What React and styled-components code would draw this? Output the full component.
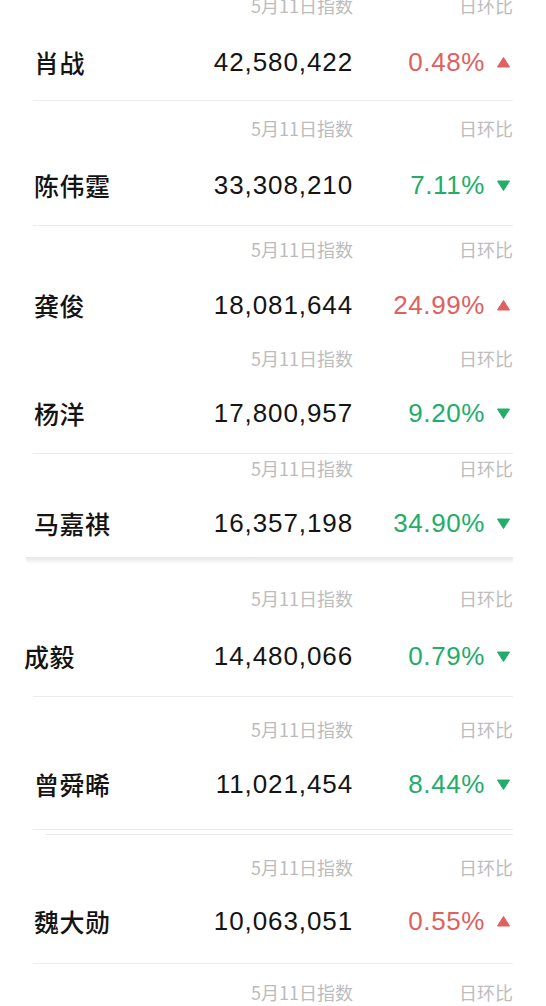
import React from "react";
import styled, { createGlobalStyle } from "styled-components";

const GlobalStyle = createGlobalStyle`
  html, body {
    margin: 0;
    padding: 0;
    background: #ffffff;
  }
  body {
    font-family: "Noto Sans CJK SC", "Liberation Sans", sans-serif;
    overflow: hidden;
  }
`;

const RED = "#e0605f";
const GREEN = "#22ad6b";

const Page = styled.div`
  width: 546px;
  height: 1006px;
  overflow: hidden;
  background: #ffffff;
`;

const Card = styled.div`
  margin-top: -7px;
  padding-bottom: 16px;
  background: #ffffff;
`;

// soft shadow left under the first card of the stitched list
const CardEdge = styled.div`
  height: 7px;
  margin: 0 33px 0 26px;
  border-radius: 0 0 4px 4px;
  background: linear-gradient(#e6e6e6, #f4f4f4 60%, #ffffff);
`;

const Section = styled.div`
  background: #ffffff;
`;

const Row = styled.div`
  padding-top: ${(p) => p.$top}px;
`;

const Line = styled.div`
  display: grid;
  grid-template-columns: 1fr auto 160px;
  align-items: center;
  padding-right: 33px;
`;

const Header = styled(Line)`
  height: 24px;
  font-size: 18px;
  line-height: 24px;
  color: #bcbcbc;
`;

const Main = styled(Line)`
  height: 36px;
  margin-top: ${(p) => p.$gap}px;
`;

const HeadCell = styled.span`
  text-align: right;
  white-space: nowrap;
`;

const Name = styled.span`
  padding-left: ${(p) => p.$indent}px;
  font-family: "Noto Sans CJK SC", sans-serif;
  font-size: 25px;
  font-weight: 500;
  color: #141414;
  letter-spacing: 0.5px;
`;

const Value = styled.span`
  text-align: right;
  font-family: "Liberation Sans", "Noto Sans", sans-serif;
  font-size: 26px;
  letter-spacing: 0.9px;
  color: #141414;
`;

const Change = styled.div`
  display: flex;
  justify-content: flex-end;
  align-items: center;
  gap: 12px;
  padding-right: 3px;
`;

const Percent = styled.span`
  font-family: "Liberation Sans", "Noto Sans", sans-serif;
  font-size: 26px;
  letter-spacing: 0.6px;
  color: ${(p) => (p.$up ? RED : GREEN)};
`;

const Divider = styled.div`
  height: 1px;
  margin: ${(p) => p.$gap}px 33px 0 ${(p) => p.$left}px;
  background: #ececec;
`;

const Arrow = ({ up }) => (
  <svg width="13" height="11" viewBox="0 0 13 11">
    {up ? (
      <path d="M6.5 0.5 L12.5 10 L0.5 10 Z" fill={RED} strokeLinejoin="round" stroke={RED} strokeWidth="1" />
    ) : (
      <path d="M0.5 1 L12.5 1 L6.5 10.5 Z" fill={GREEN} strokeLinejoin="round" stroke={GREEN} strokeWidth="1" />
    )}
  </svg>
);

const topRows = [
  { name: "肖战", value: "42,580,422", change: "0.48%", up: true, top: 0, mid: 27, bottom: 20, divider: 1 },
  { name: "陈伟霆", value: "33,308,210", change: "7.11%", up: false, top: 15, mid: 27, bottom: 22, divider: 1 },
  { name: "龚俊", value: "18,081,644", change: "24.99%", up: true, top: 11, mid: 26, divider: 0 },
  { name: "杨洋", value: "17,800,957", change: "9.20%", up: false, top: 23, mid: 25, bottom: 22, divider: 1 },
  { name: "马嘉祺", value: "16,357,198", change: "34.90%", up: false, top: 2, mid: 25, divider: 0 },
];

const bottomRows = [
  { name: "成毅", value: "14,480,066", change: "0.79%", up: false, top: 22, mid: 28, bottom: 22, divider: 1, indent: 24 },
  { name: "曾舜晞", value: "11,021,454", change: "8.44%", up: false, top: 20, mid: 25, bottom: 27, divider: 2 },
  { name: "魏大勋", value: "10,063,051", change: "0.55%", up: true, top: 20, mid: 24, bottom: 24, divider: 1 },
];

const HeadLine = () => (
  <Header>
    <span />
    <HeadCell>5月11日指数</HeadCell>
    <HeadCell>日环比</HeadCell>
  </Header>
);

const StarRow = ({ row }) => (
  <>
    <Row $top={row.top}>
      <HeadLine />
      <Main $gap={row.mid}>
        <Name $indent={row.indent || 34}>{row.name}</Name>
        <Value>{row.value}</Value>
        <Change>
          <Percent $up={row.up}>{row.change}</Percent>
          <Arrow up={row.up} />
        </Change>
      </Main>
    </Row>
    {row.divider >= 1 && <Divider $gap={row.bottom} $left={33} />}
    {row.divider === 2 && <Divider $gap={4} $left={45} />}
  </>
);

export default function App() {
  return (
    <Page>
      <GlobalStyle />
      <Card>
        {topRows.map((row) => (
          <StarRow key={row.name} row={row} />
        ))}
      </Card>
      <CardEdge />
      <Section>
        {bottomRows.map((row) => (
          <StarRow key={row.name} row={row} />
        ))}
        <Row $top={16}>
          <HeadLine />
        </Row>
      </Section>
    </Page>
  );
}
